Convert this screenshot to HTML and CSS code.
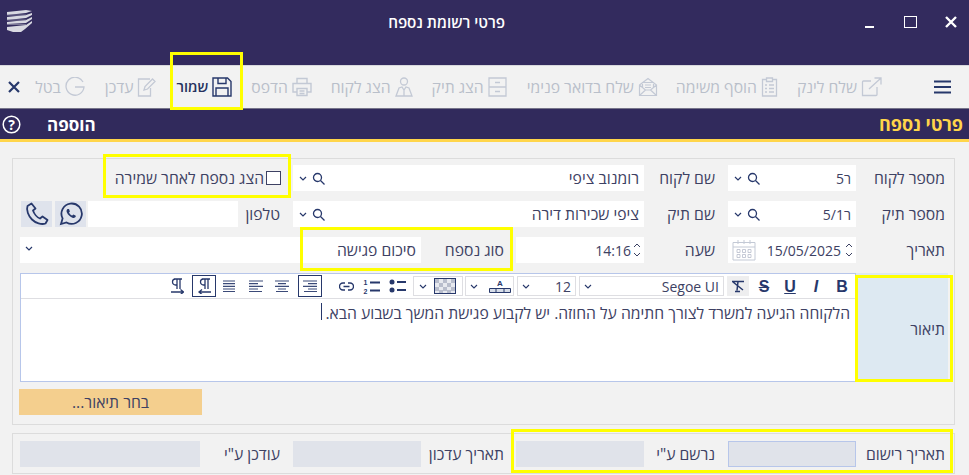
FILE: index.html
```html
<!DOCTYPE html>
<html lang="he" dir="rtl">
<head>
<meta charset="utf-8">
<title>פרטי רשומת נספח</title>
<link rel="stylesheet" href="styles.css">
</head>
<body>
<div class="page">
  <header class="titlebar">
    <div class="win-controls">
      <svg class="win-ic" width="14" height="14" viewBox="0 0 14 14"><path d="M2 2l10 10M12 2L2 12" stroke="#fff" stroke-width="2.400" fill="none"/></svg>
      <span class="win-max"></span>
      <span class="win-min"></span>
    </div>
    <h1 class="wintitle">פרטי רשומת נספח</h1>
    <svg class="logo" width="27" height="24" viewBox="0 0 27 24"><path d="M1 3L20 1l6 1-6 2L1 6zM1 8l19-2 6-2v2l-6 3L1 11zM1 13l19-2 6-3v2l-6 4-19 1zM1 18l19-2 6-4v2l-7 6-4 3H7l-6-2z" fill="#d9d9e2"/><path d="M1 6h19M1 11h19M1 15.500h19" stroke="#8d8aa5" stroke-width=".8"/></svg>
  </header>

  <nav class="toolbar">
    <button class="hamb" aria-label="תפריט"><svg width="17" height="14" viewBox="0 0 17 14"><path d="M0 1.500h17M0 7h17M0 12.500h17" stroke="#27386b" stroke-width="2"/></svg></button>
    <div class="tools">
      <span class="tool t-link"><svg width="21" height="20" viewBox="0 0 21 20"><path d="M10 4H2.500A1 1 0 0 0 1.500 5v13.500h13.500a1 1 0 0 0 1-1V10M8 12L19.500 1.500M13.500 1h6.500v6.500" fill="none" stroke="#c3c9d5" stroke-width="1.300"/></svg>שלח לינק</span>
      <span class="tool t-task"><svg width="17" height="20" viewBox="0 0 17 20"><path d="M5 2.500H1.500v16.500h14V2.500H12M5.500 1h6v3.500h-6zM4 8h2M8 8h5M4 11.500h2M8 11.500h5M4 15h2M8 15h5" fill="none" stroke="#c3c9d5" stroke-width="1.300"/></svg>הוסף משימה</span>
      <span class="tool t-mail"><svg width="20" height="20" viewBox="0 0 20 20"><path d="M1.500 8L10 1.500 18.500 8v10.500h-17zM1.500 8l6 5-6 5.500M18.500 8l-6 5 6 5.500M7.500 13h5M4.500 10V5.500h11V10M7 8h6M7 10.500h6" fill="none" stroke="#c3c9d5" stroke-width="1.200"/></svg>שלח בדואר פנימי</span>
      <span class="tool t-file"><svg width="19" height="20" viewBox="0 0 19 20"><path d="M1 1h17v18H1zM1 10h17M7 5.500h5M7 14.500h5" fill="none" stroke="#c3c9d5" stroke-width="1.300"/></svg>הצג תיק</span>
      <span class="tool t-cust"><svg width="18" height="20" viewBox="0 0 18 20"><circle cx="9" cy="4.500" r="3.500" fill="none" stroke="#c3c9d5" stroke-width="1.300"/><path d="M1 19l3-8 3-1 2 3 2-3 3 1 3 8zM9 13v6" fill="none" stroke="#c3c9d5" stroke-width="1.300"/></svg>הצג לקוח</span>
      <span class="tool t-print"><svg width="20" height="20" viewBox="0 0 20 20"><path d="M5 6V1.500h10V6M5 15H1V6.500h18V15h-4M5 11.500h10v7H5zM7.500 14h5M7.500 16.500h5" fill="none" stroke="#c3c9d5" stroke-width="1.400"/></svg>הדפס</span>
      <span class="tool t-save"><svg width="20" height="20" viewBox="0 0 20 20"><path d="M1 1h14.500L19 4.500V19H1zM6 1v5.500h8V1M4 19v-8h12v8" fill="none" stroke="#27386b" stroke-width="1.400"/></svg>שמור</span>
      <span class="tool t-edit"><svg width="19" height="20" viewBox="0 0 19 20"><path d="M13 2H1.500v17h12V11M7 13l1-3.500L15.500 2l2.500 2.500L10.500 12z" fill="none" stroke="#c3c9d5" stroke-width="1.300"/></svg>עדכן</span>
      <span class="tool t-undo"><svg width="20" height="20" viewBox="0 0 20 20"><path d="M18 5A9 9 0 1 0 19 10H10" fill="none" stroke="#c3c9d5" stroke-width="1.300"/></svg>בטל</span>
    </div>
    <svg class="close-x" width="12" height="12" viewBox="0 0 12 12"><path d="M1 1l10 10M11 1L1 11" stroke="#27386b" stroke-width="2.200"/></svg>
  </nav>

  <div class="subhead">
    <span class="sub-title">פרטי נספח</span>
    <span class="sub-mode">הוספה</span>
    <svg class="help" width="19" height="19" viewBox="0 0 19 19"><circle cx="9.500" cy="9.500" r="8.300" fill="none" stroke="#fff" stroke-width="1.500"/><text x="9.500" y="14.500" text-anchor="middle" class="help-q">?</text></svg>
  </div>

  <main class="content">
    <section class="panel main-panel">
      <div class="row">
        <label class="lbl l1">מספר לקוח</label>
        <div class="field f-a"><span class="val">ר5</span><svg class="srch" width="13" height="13" viewBox="0 0 13 13"><circle cx="5.500" cy="5.500" r="4" fill="none" stroke="#27386b" stroke-width="1.300"/><path d="M8.500 8.500l4 4" stroke="#27386b" stroke-width="1.300"/></svg><svg class="chev" width="8" height="5" viewBox="0 0 8 5"><path d="M1 1l3 3 3-3" fill="none" stroke="#27386b" stroke-width="1.200"/></svg></div>
        <label class="lbl l2">שם לקוח</label>
        <div class="field f-b"><span class="val">רומנוב ציפי</span><svg class="srch" width="13" height="13" viewBox="0 0 13 13"><circle cx="5.500" cy="5.500" r="4" fill="none" stroke="#27386b" stroke-width="1.300"/><path d="M8.500 8.500l4 4" stroke="#27386b" stroke-width="1.300"/></svg><svg class="chev" width="8" height="5" viewBox="0 0 8 5"><path d="M1 1l3 3 3-3" fill="none" stroke="#27386b" stroke-width="1.200"/></svg></div>
        <label class="check"><span class="box"></span>הצג נספח לאחר שמירה</label>
      </div>
      <div class="row">
        <label class="lbl l1">מספר תיק</label>
        <div class="field f-a"><span class="val">ר5/1</span><svg class="srch" width="13" height="13" viewBox="0 0 13 13"><circle cx="5.500" cy="5.500" r="4" fill="none" stroke="#27386b" stroke-width="1.300"/><path d="M8.500 8.500l4 4" stroke="#27386b" stroke-width="1.300"/></svg><svg class="chev" width="8" height="5" viewBox="0 0 8 5"><path d="M1 1l3 3 3-3" fill="none" stroke="#27386b" stroke-width="1.200"/></svg></div>
        <label class="lbl l2">שם תיק</label>
        <div class="field f-b"><span class="val">ציפי שכירות דירה</span><svg class="srch" width="13" height="13" viewBox="0 0 13 13"><circle cx="5.500" cy="5.500" r="4" fill="none" stroke="#27386b" stroke-width="1.300"/><path d="M8.500 8.500l4 4" stroke="#27386b" stroke-width="1.300"/></svg><svg class="chev" width="8" height="5" viewBox="0 0 8 5"><path d="M1 1l3 3 3-3" fill="none" stroke="#27386b" stroke-width="1.200"/></svg></div>
        <label class="lbl l-phone">טלפון</label>
        <div class="field f-phone"></div>
        <button class="sq" aria-label="WhatsApp"><svg width="24" height="24" viewBox="0 0 24 24"><path d="M2 22l1.600-5.600A10.200 10.200 0 1 1 7.500 20.500z" fill="none" stroke="#27386b" stroke-width="1.800"/><path d="M8.500 7c-1 .8-1.200 2-.6 3.500 1 2.300 3 4.300 5.500 5.200 1.500.5 2.700.2 3.400-.9l-.3-1.300-2.200-1-1 1.100c-1.300-.5-2.700-1.900-3.300-3.200l.9-1-.9-2.300z" fill="#27386b"/></svg></button>
        <button class="sq" aria-label="טלפון"><svg width="24" height="24" viewBox="0 0 24 24"><path d="M6.500 1.500L2.500 4c-1.500 4 1 10 4.500 13.500S16.500 23 20.500 21.500l2-3.500-5-3.500-2.500 2c-3-1-6-5-7-8l2.500-2z" fill="none" stroke="#27386b" stroke-width="1.800" stroke-linejoin="round"/></svg></button>
      </div>
      <div class="row">
        <label class="lbl l1">תאריך</label>
        <div class="field f-a f-date"><span class="spin"><svg width="8" height="16" viewBox="0 0 8 16"><path d="M1 5l3-3 3 3M1 11l3 3 3-3" fill="none" stroke="#3b4163" stroke-width="1"/></svg></span><span class="val">15/05/2025</span><svg class="cal" width="24" height="22" viewBox="0 0 24 22"><path d="M1 3.500h22V21H1zM1 8h22" fill="none" stroke="#c3c9d5"/><path d="M6 1v4M12 1v4M18 1v4" stroke="#c3c9d5"/><path d="M5 10.500h3v3H5zM10.500 10.500h3v3h-3zM16 10.500h3v3h-3zM5 15.500h3v3H5zM10.500 15.500h3v3h-3zM16 15.500h3v3h-3z" fill="none" stroke="#b7bdcc" stroke-width=".8"/></svg></div>
        <label class="lbl l2">שעה</label>
        <div class="field f-time"><span class="spin"><svg width="8" height="16" viewBox="0 0 8 16"><path d="M1 5l3-3 3 3M1 11l3 3 3-3" fill="none" stroke="#3b4163" stroke-width="1"/></svg></span><span class="val">14:16</span></div>
        <label class="lbl l-type">סוג נספח</label>
        <div class="field f-type"><span class="val">סיכום פגישה</span><svg class="chev chev-end" width="8" height="5" viewBox="0 0 8 5"><path d="M1 1l3 3 3-3" fill="none" stroke="#27386b" stroke-width="1.200"/></svg></div>
      </div>
      <div class="desc-row">
        <div class="desc-label">תיאור</div>
        <div class="editor">
          <div class="ed-bar">
            <b class="eb b-b">B</b>
            <i class="eb b-i">I</i>
            <u class="eb b-u">U</u>
            <s class="eb b-s">S</s>
            <span class="eb b-clear"><svg width="14" height="13" viewBox="0 0 14 13"><path d="M1 1.500h12M7 1.500l-1 9M4 11.500h5M2 2l10 8" fill="none" stroke="#27386b" stroke-width="1.500"/></svg></span>
            <span class="sel s-font"><span class="sel-val">Segoe UI</span><svg width="8" height="5" viewBox="0 0 8 5"><path d="M1 1l3 3 3-3" fill="none" stroke="#27386b" stroke-width="1.100"/></svg></span>
            <span class="sel s-size"><span class="sel-val">12</span><svg width="8" height="5" viewBox="0 0 8 5"><path d="M1 1l3 3 3-3" fill="none" stroke="#27386b" stroke-width="1.100"/></svg></span>
            <span class="sel s-color"><svg width="24" height="16" viewBox="0 0 24 16"><text x="12" y="8" text-anchor="middle" class="a-mark">A</text><path d="M1.500 10.500h21v4h-21zM8 10.500v4M16 10.500v4" fill="#d7dde8" stroke="#27386b"/></svg><svg width="8" height="5" viewBox="0 0 8 5"><path d="M1 1l3 3 3-3" fill="none" stroke="#27386b" stroke-width="1.100"/></svg></span>
            <span class="sel s-back"><svg class="checker" width="22" height="16" viewBox="0 0 22 16"><rect x=".5" y=".5" width="21" height="15" fill="#e7e9ef" stroke="#27386b"/><path d="M1 1h4v4H1zM9 1h4v4H9zM17 1h4v4h-4zM5 5h4v4H5zM13 5h4v4h-4zM1 9h4v4H1zM9 9h4v4H9zM17 9h4v4h-4zM5 12h4v3H5zM13 12h4v3h-4z" fill="#b8bdcc"/></svg><svg width="8" height="5" viewBox="0 0 8 5"><path d="M1 1l3 3 3-3" fill="none" stroke="#27386b" stroke-width="1.100"/></svg></span>
            <span class="eb b-bul"><svg width="18" height="14" viewBox="0 0 18 14"><circle cx="3" cy="3" r="2.500" fill="#27386b"/><circle cx="3" cy="11" r="2.500" fill="#27386b"/><path d="M8 3h9M8 11h9" stroke="#27386b" stroke-width="1.800"/></svg></span>
            <span class="eb b-num"><svg width="18" height="15" viewBox="0 0 18 15"><path d="M7 3.500h10M7 11.500h10" stroke="#27386b" stroke-width="1.800"/><text x="2.500" y="6" text-anchor="middle" class="n-mark">1</text><text x="2.500" y="14.500" text-anchor="middle" class="n-mark">2</text></svg></span>
            <span class="eb b-link"><svg width="15" height="9" viewBox="0 0 15 9"><path d="M6 1H4a3.500 3.500 0 0 0 0 7h2M9 1h2a3.500 3.500 0 0 1 0 7H9M4.500 4.500h6" fill="none" stroke="#27386b" stroke-width="1.400"/></svg></span>
            <span class="eb b-ar on"><svg width="14" height="12" viewBox="0 0 14 12"><path d="M0 1h14M5 3.700h9M0 6.300h14M5 9h9M1 11.500h13" stroke="#3b4a78" stroke-width="1.200"/></svg></span>
            <span class="eb b-ac"><svg width="14" height="12" viewBox="0 0 14 12"><path d="M0 1h14M3 3.700h8M0 6.300h14M3 9h8M1 11.500h12" stroke="#3b4a78" stroke-width="1.200"/></svg></span>
            <span class="eb b-al"><svg width="14" height="12" viewBox="0 0 14 12"><path d="M0 1h14M0 3.700h9M0 6.300h14M0 9h9M0 11.500h13" stroke="#3b4a78" stroke-width="1.200"/></svg></span>
            <span class="eb b-aj"><svg width="12" height="12" viewBox="0 0 12 12"><path d="M0 1h12M0 3.700h12M0 6.300h12M0 9h12M0 11.500h12" stroke="#3b4a78" stroke-width="1.200"/></svg></span>
            <span class="eb b-rtl on"><svg width="15" height="16" viewBox="0 0 15 16"><path d="M9 1H6.500a3 3 0 0 0 0 6H8M8 1v10M11 1v10M5 1h8M14 14H2M5 11.500L2 14l3 2.500" fill="none" stroke="#27386b" stroke-width="1.300"/></svg></span>
            <span class="eb b-ltr"><svg width="13" height="16" viewBox="0 0 13 16"><path d="M7 1H4.500a3 3 0 0 0 0 6H6M6 1v10M9 1v10M3 1h8M0 14h12M9.500 11.500L12.500 14l-3 2.500" fill="none" stroke="#27386b" stroke-width="1.300"/></svg></span>
          </div>
          <div class="ed-body"><span class="ed-text">הלקוחה הגיעה למשרד לצורך חתימה על החוזה. יש לקבוע פגישת המשך בשבוע הבא.</span><span class="caret"></span></div>
        </div>
      </div>
      <button class="pick">בחר תיאור...</button>
    </section>

    <section class="panel foot-panel">
      <label class="lbl l1">תאריך רישום</label>
      <div class="field ro ro-first"></div>
      <label class="lbl l2">נרשם ע"י</label>
      <div class="field ro ro-b"></div>
      <label class="lbl l-date">תאריך עדכון</label>
      <div class="field ro ro-c"></div>
      <label class="lbl l-by">עודכן ע"י</label>
      <div class="field ro ro-d"></div>
    </section>
  </main>

  <span class="mark m-save"></span>
  <span class="mark m-check"></span>
  <span class="mark m-type"></span>
  <span class="mark m-desc"></span>
  <span class="mark m-foot"></span>
</div>
</body>
</html>
```
FILE: styles.css
```css
* { box-sizing: border-box; }
html, body { margin: 0; padding: 0; }
body {
  font-family: "Open Sans", "DejaVu Sans", "Liberation Sans", sans-serif;
  font-size: 15.700px;
  color: #3d4163;
  background: #f2f2f2;
  overflow: hidden;
}
.page { position: relative; width: 969px; height: 475px; overflow: hidden; }

.titlebar {
  height: 65px;
  background: #332b5e;
  display: flex;
  align-items: flex-start;
  position: relative;
}
.win-controls { display: flex; align-items: center; width: 120px; height: 22px; margin-top: 11px; padding-right: 11px; }
.win-ic { display: block; }
.win-max { width: 13px; height: 12px; border: 1.500px solid #fff; margin-right: 27px; }
.win-min { width: 9px; height: 2px; background: #fff; margin-right: 30px; margin-top: 9px; }
.wintitle { margin: 12px 344px 0 0; font-size: 15.200px; line-height: 20px; font-weight: 600; color: #fff; }
.logo { margin-top: 9px; margin-right: auto; margin-left: 6px; }

.toolbar {
  height: 44px;
  background: #f2f2f2;
  border-top: 1px solid #d8d8dd;
  border-bottom: 1px solid #77758a;
  display: flex;
  align-items: center;
  padding: 0 18px 0 8px;
}
.hamb { border: 0; background: none; padding: 0; margin: 0 0 0 52px; display: flex; }
.tools { display: flex; align-items: center; flex: 1; }
.tool { display: flex; align-items: center; gap: 2px; font-size: 15.700px; color: #b9bfca; white-space: nowrap; line-height: 20px; }
.tool svg { flex: none; margin-left: 2px; }
.t-task { margin-right: 19px; }
.t-mail { margin-right: 18px; }
.t-file { margin-right: 20px; }
.t-cust { margin-right: 19px; }
.t-print { margin-right: 19px; }
.t-save { margin-right: 19px; color: #27325f; font-weight: 600; font-size: 14.500px; }
.t-edit { margin-right: 20px; }
.t-undo { margin-right: 20px; }
.close-x { margin-right: auto; }

.subhead {
  height: 33px;
  background: #312a5c;
  border-bottom: 3px solid #ffd54a;
  display: flex;
  align-items: center;
  padding: 0 6px 0 2px;
}
.sub-title { color: #ffd54a; font-size: 18px; font-weight: 700; }
.sub-mode { color: #fff; font-size: 17px; font-weight: 700; margin-right: auto; margin-left: 26px; }
.help-q { font: 700 14px "Open Sans", sans-serif; fill: #fff; }

.content { padding: 16px 14px 0 12px; }
.panel { border: 1px solid #dcdcdc; }
.main-panel { height: 267px; padding: 6px 6px 0 7px; }
.row { display: flex; align-items: stretch; height: 26px; margin-bottom: 10px; }
.lbl { display: flex; align-items: center; white-space: nowrap; line-height: 26px; }
.l1 { width: 92px; padding-right: 3px; }
.l2 { width: 84px; padding-right: 13px; }
.l-phone { width: 55px; padding-right: 13px; }
.l-type { width: 95px; padding-right: 12px; }
.l-date { width: 95px; padding-right: 12px; }
.l-by { width: 93px; padding-right: 13px; }

.field { background: #fff; display: flex; align-items: center; padding: 0 5px 0 6px; white-space: nowrap; }
.val { flex: 1; }
.srch { margin-left: 5px; flex: none; }
.chev { flex: none; }
.f-a { width: 128px; font-size: 14px; }
.f-b { width: 351px; }
.f-phone { width: 150px; }
.f-time { width: 128px; padding-right: 3px; font-size: 14px; }
.f-time .spin { margin-left: 2px; }
.f-date { padding-right: 3px; padding-left: 4px; }
.f-type { width: 401px; padding: 0 5px 0 3px; }
.f-type .chev-end { margin-left: 2px; margin-bottom: 4px; }
.spin { display: flex; margin-left: 4px; flex: none; }
.cal { flex: none; }
.check { display: flex; align-items: center; margin-right: 12px; white-space: nowrap; }
.box { width: 15px; height: 14px; border: 1px solid #3d4163; background: #fff; margin-left: 2px; }
.sq { width: 31px; border: 0; padding: 0; background: #dfe3ec; display: flex; align-items: center; justify-content: center; margin-right: 3px; }
.f-phone + .sq { margin-right: 2px; }

.desc-row { display: flex; height: 109px; }
.desc-label { width: 92px; background: #dde9f2; display: flex; align-items: center; padding-right: 3px; padding-top: 2px; }
.editor { flex: 1; border: 1px solid #b7c6ea; background: #fff; display: flex; flex-direction: column; }
.ed-bar { height: 25px; border-bottom: 1px solid #dedee2; display: flex; align-items: center; color: #27386b; }
.eb { display: flex; align-items: center; justify-content: center; flex: none; width: 26px; height: 21px; font-size: 16px; line-height: 21px; font-family: "Liberation Sans", sans-serif; }
.b-b { font-weight: 700; }
.b-i { font-weight: 700; font-style: italic; }
.b-u { font-weight: 700; text-decoration: underline; }
.b-s { font-weight: 700; text-decoration: line-through; }
.b-clear { width: 22px; height: 20px; background: #eeeeef; margin-right: 2px; }
.sel { display: flex; align-items: center; justify-content: space-between; height: 20px; border: 1px solid #dedee2; padding: 0 4px; margin-right: 3px; flex: none; }
.sel-val { font-size: 14px; color: #3d4163; }
.s-font { width: 145px; }
.s-size { width: 59px; }
.s-color { width: 49px; padding: 0 1px 0 4px; }
.s-back { width: 50px; margin-right: 2px; padding: 0 6px 0 5px; }
.b-bul { width: 20px; margin-right: 5px; }
.b-num { width: 22px; margin-right: 5px; }
.b-link { width: 18px; margin-right: 6px; }
.b-ar { width: 24px; height: 22px; margin-right: 15px; }
.b-ac { width: 24px; margin-right: 4px; }
.b-al { width: 24px; margin-right: 2px; }
.b-aj { width: 26px; margin-right: 2px; }
.b-rtl { width: 24px; height: 22px; }
.b-ltr { width: 20px; margin-right: 5px; }
.on { border: 1.500px solid #27386b; }
.ed-body { flex: 1; padding: 4px 5px 0 0; line-height: 20px; display: flex; align-items: flex-start; white-space: nowrap; }
.caret { width: 1px; height: 17px; margin-right: 3px; background: #27386b; }
.pick { display: block; width: 183px; height: 26px; margin: 7px auto 0 -1px; border: 0; background: #f4cf8e; color: #3d4163; font: 15.700px "Open Sans", "DejaVu Sans", sans-serif; }

.foot-panel { height: 41px; margin-top: 8px; display: flex; align-items: center; padding: 0 6px 0 7px; }
.ro { background: #e0e3ea; height: 26px; padding: 0; }
.ro-first { width: 128px; border: 1px solid #b7c6ea; }
.ro-b { width: 128px; }
.ro-c { width: 128px; }
.ro-d { width: 180px; }

.a-mark { font: 700 8px "Liberation Sans", sans-serif; fill: #27386b; }
.n-mark { font: 700 7px "Liberation Sans", sans-serif; fill: #27386b; }

.mark { position: absolute; border: 3px solid #ffff00; pointer-events: none; }
.m-save { left: 170px; top: 52px; width: 73px; height: 58px; }
.m-check { left: 103px; top: 154px; width: 188px; height: 44px; }
.m-type { left: 300px; top: 227px; width: 213px; height: 44px; }
.m-desc { left: 855px; top: 275px; width: 98px; height: 107px; }
.m-foot { left: 511px; top: 429px; width: 442px; height: 44px; }
```
